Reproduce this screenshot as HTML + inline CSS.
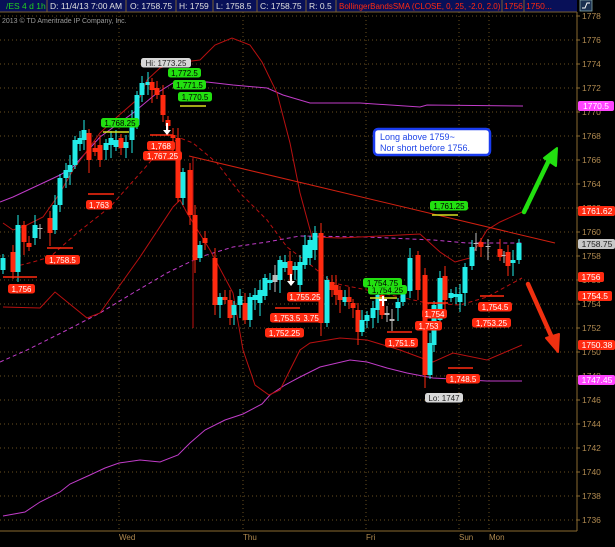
<!DOCTYPE html>
<html><head><meta charset="utf-8"><style>
html,body{margin:0;padding:0;background:#000;}
body{width:615px;height:542px;overflow:hidden;position:relative;font-family:"Liberation Sans",sans-serif;}
svg text{font-family:"Liberation Sans",sans-serif;}
</style></head><body>
<svg id="s" width="615" height="542" viewBox="0 0 615 542" xmlns="http://www.w3.org/2000/svg">
<rect width="615" height="542" fill="#000"/>
<g id="grid" stroke="#6a5020" stroke-width="1" stroke-dasharray="1,3"></g>
<g stroke="#6a5020" stroke-dasharray="1,3">
<line x1="119" y1="12" x2="119" y2="531"/><line x1="243" y1="12" x2="243" y2="531"/><line x1="366" y1="12" x2="366" y2="531"/><line x1="459" y1="12" x2="459" y2="531"/><line x1="489" y1="12" x2="489" y2="531"/>
</g>
<line x1="577" y1="12" x2="577" y2="531" stroke="#8a6a30"/>
<line x1="0" y1="531" x2="577" y2="531" stroke="#8a6a30"/>
<g id="axlab" fill="#b08a50" font-size="8.5"></g>
<g fill="#b08a50" font-size="8">
<text x="119" y="540">Wed</text><text x="243" y="540">Thu</text><text x="366" y="540">Fri</text><text x="459" y="540">Sun</text><text x="489" y="540">Mon</text>
</g>
<text x="2" y="23" fill="#9a9a9a" font-size="7">2013 © TD Ameritrade IP Company, Inc.</text>

<polyline fill="none" stroke="#c03cc8" stroke-width="1" points="0,202 13,197 43,183 60,175 73,167 100,137 133,113 157,93 173,83 207,82 233,85 267,88 283,95 310,103 360,103 420,107 427,105 523,106"/>
<polyline fill="none" stroke="#c03cc8" stroke-width="1" points="3,516 25,512 40,502 60,492 70,484 90,475 105,468 119,463 140,460 160,462 178,455 190,443 205,430 225,420 243,414 262,404 270,395 285,385 300,377 320,367 350,360 367,362 387,368 407,373 433,378 487,381 522,381"/>
<polyline fill="none" stroke="#c03cc8" stroke-width="1" stroke-dasharray="4,3" points="0,362 27,350 67,330 100,313 133,293 167,273 200,257 233,247 267,242 300,236 367,237 433,240 467,243 522,243"/>
<polyline fill="none" stroke="#b81010" stroke-width="1" points="3,223 13,230 27,225 43,217 60,193 73,170 100,133 117,117 140,97 147,80 160,68 175,63 200,60 215,45 232,38 250,45 262,62 277,93 290,143 300,193 312,237 340,238 380,236 420,234 440,252 455,262 470,258 487,230 500,222 522,212"/>
<polyline fill="none" stroke="#b81010" stroke-width="1" points="3,307 40,308 55,292 87,318 100,313 140,257 173,207 180,200 187,213 210,250 233,293 243,350 255,385 269,395 280,390 290,370 300,350 310,343 340,338 367,340 400,350 427,360 433,362 453,353 487,360 522,345"/>
<polyline fill="none" stroke="#b81010" stroke-width="1" stroke-dasharray="4,3" points="13,267 33,262 50,257 77,233 110,207 143,170 163,147 180,138 193,143 217,163 240,193 267,220 287,247 307,262 333,283 367,290 400,297 427,303 460,305 487,297 522,278"/>
<line x1="189" y1="156" x2="555" y2="243" stroke="#d02010" stroke-width="1"/>
<line x1="193" y1="157" x2="193" y2="328" stroke="#c01010" stroke-width="1"/>

<g id="candles"></g>

<g stroke="#ff2a10" stroke-width="1.5">
<line x1="3" y1="277" x2="37" y2="277"/><line x1="47" y1="248" x2="73" y2="248"/><line x1="88" y1="194" x2="114" y2="194"/><line x1="150" y1="135" x2="173" y2="135"/>
<line x1="387" y1="332" x2="412" y2="332"/><line x1="423" y1="303" x2="448" y2="303"/><line x1="480" y1="296" x2="504" y2="296"/><line x1="448" y1="368" x2="473" y2="368"/>
<line x1="275" y1="308" x2="300" y2="308"/>
</g>
<g stroke="#d8e020" stroke-width="1.5">
<line x1="103" y1="132" x2="129" y2="132"/><line x1="180" y1="106" x2="206" y2="106"/><line x1="370" y1="298" x2="397" y2="298"/><line x1="432" y1="215" x2="458" y2="215"/>
</g>

<g id="labels" font-size="8" text-anchor="middle"></g>

<path d="M167,123 L167,131" stroke="#fff" stroke-width="2"/><path d="M163,130 L171,130 L167,135 Z" fill="#fff"/>
<path d="M291,274 L291,282" stroke="#fff" stroke-width="2"/><path d="M287,281 L295,281 L291,286 Z" fill="#fff"/>
<path d="M383,296 L383,306 M379,300 L387,300" stroke="#fff" stroke-width="2"/>
<path d="M524,212 L550,158" stroke="#22e010" stroke-width="4.5" stroke-linecap="round"/>
<path d="M544,158 L557,148 L556,166 Z" fill="#22e010" stroke="#22e010" stroke-width="2" stroke-linejoin="round"/>
<path d="M528,284 L553,340" stroke="#f03010" stroke-width="4.5" stroke-linecap="round"/>
<path d="M546,338 L558,352 L559,334 Z" fill="#f03010" stroke="#f03010" stroke-width="2" stroke-linejoin="round"/>

<rect x="374" y="129" width="116" height="26" rx="4" fill="#fff" stroke="#1a3cf0" stroke-width="2.5"/>
<text x="380" y="140" fill="#2046e8" font-size="9">Long above 1759~</text>
<text x="380" y="151" fill="#2046e8" font-size="9">Nor short before 1756.</text>

<g font-size="8.5" text-anchor="middle">
<rect x="578" y="101" width="36" height="10" rx="2" fill="#ff44ff"/><text x="596" y="109" fill="#fff">1770.5</text>
<rect x="578" y="206" width="37" height="10" rx="2" fill="#ff2a10"/><text x="597" y="214" fill="#fff">1761.62</text>
<rect x="578" y="239" width="37" height="10" rx="2" fill="#c8c8c8"/><text x="597" y="247" fill="#222">1758.75</text>
<rect x="578" y="272" width="26" height="10" rx="2" fill="#ff2a10"/><text x="591" y="280" fill="#fff">1756</text>
<rect x="578" y="291" width="34" height="10" rx="2" fill="#ff2a10"/><text x="595" y="299" fill="#fff">1754.5</text>
<rect x="578" y="340" width="37" height="10" rx="2" fill="#ff2a10"/><text x="597" y="348" fill="#fff">1750.38</text>
<rect x="578" y="375" width="37" height="10" rx="2" fill="#ff44ff"/><text x="597" y="383" fill="#fff">1747.45</text>
</g>

<rect x="0" y="0" width="577" height="12" fill="#081058"/>
<g stroke="#7a6030" stroke-width="1">
<line x1="47" y1="0" x2="47" y2="12"/><line x1="126" y1="0" x2="126" y2="12"/><line x1="176" y1="0" x2="176" y2="12"/><line x1="213" y1="0" x2="213" y2="12"/><line x1="257" y1="0" x2="257" y2="12"/><line x1="306" y1="0" x2="306" y2="12"/><line x1="336" y1="0" x2="336" y2="12"/><line x1="502" y1="0" x2="502" y2="12"/><line x1="524" y1="0" x2="524" y2="12"/>
<line x1="0" y1="12" x2="577" y2="12"/>
</g>
<g font-size="8.5" fill="#e0e0e0">
<text x="6" y="9" fill="#22d020">/ES 4 d 1h</text>
<text x="50" y="9">D: 11/4/13 7:00 AM</text>
<text x="130" y="9">O: 1758.75</text>
<text x="179" y="9">H: 1759</text>
<text x="216" y="9">L: 1758.5</text>
<text x="260" y="9">C: 1758.75</text>
<text x="309" y="9">R: 0.5</text>
<text x="339" y="9" fill="#ff2a10" font-size="8">BollingerBandsSMA (CLOSE, 0, 25, -2.0, 2.0)</text>
<text x="504" y="9" fill="#ff2a10">1756</text>
<text x="526" y="9" fill="#ff2a10">1750...</text>
</g>
<rect x="580" y="0" width="12" height="11" fill="#1a3050" stroke="#8aa" stroke-width="0.8"/>
<path d="M582,8 L585,8 L587,3 L590,3" stroke="#fff" fill="none" stroke-width="1"/>
</svg>
<script>
var NS="http://www.w3.org/2000/svg",s=document.getElementById('s');
function el(p,t,a){var e=document.createElementNS(NS,t);for(var k in a)e.setAttribute(k,a[k]);p.appendChild(e);return e;}
var g=document.getElementById('grid'),al=document.getElementById('axlab');
for(var p=1778;p>=1736;p-=2){var y=16+(1778-p)*12;el(g,'line',{x1:0,y1:y,x2:577,y2:y});el(al,'line',{x1:577,y1:y,x2:580,y2:y,stroke:'#8a6a30'});var t=el(al,'text',{x:582,y:y+3});t.textContent=p;}
var C='#22ece8',R='#ff2a10',G='#bbbbbb';
var d=[[3,258,270,C],[13,252,272,R],[18,225,272,C],[24,225,242,R],[29,243,247,R],[35,225,238,C],[40,228,229,G],[50,218,233,R],[55,205,230,C],[60,178,205,C],[66,170,178,C],[70,165,172,C],[75,140,165,C],[80,138,144,C],[84,130,140,C],[89,133,160,R],[95,148,152,R],[100,145,160,R],[106,143,150,C],[111,138,145,C],[116,140,147,C],[121,138,148,R],[126,142,148,C],[132,120,140,C],[137,95,125,C],[142,83,95,C],[148,82,85,C],[152,82,90,R],[157,88,95,R],[163,95,115,R],[168,120,126,R],[173,135,138,R],[178,138,198,R],[183,172,198,C],[190,170,215,R],[195,215,260,R],[200,245,258,C],[205,238,243,R],[215,258,305,R],[220,297,305,C],[225,297,300,R],[230,300,318,R],[234,305,315,C],[240,296,305,C],[245,303,320,R],[250,297,320,C],[255,295,300,C],[260,290,303,C],[265,278,296,C],[270,280,283,C],[275,275,282,G],[280,260,280,C],[285,262,268,C],[290,261,275,R],[295,266,270,C],[300,262,285,C],[305,245,265,C],[310,240,258,C],[315,233,250,C],[321,233,323,R],[327,280,323,C],[332,282,290,R],[336,285,295,R],[340,290,300,R],[345,297,302,C],[349,297,302,R],[353,303,308,R],[358,310,332,R],[362,320,332,C],[367,315,321,C],[373,308,318,C],[378,295,310,C],[382,295,315,R],[387,313,315,G],[392,319,321,G],[398,302,308,C],[403,292,302,C],[410,258,291,C],[418,255,290,R],[425,275,375,R],[430,343,375,C],[434,305,345,C],[440,278,320,C],[445,276,300,R],[451,293,298,C],[456,294,297,C],[460,294,302,C],[465,267,293,C],[472,247,266,C],[476,243,244,G],[481,242,247,R],[488,246,247,G],[500,249,257,R],[504,255,256,G],[508,252,266,R],[513,260,263,C],[519,243,260,C]];
var cg=document.getElementById('candles');
d.forEach(function(c,i){var x=c[0],t=Math.min(c[1],c[2]),b=Math.max(c[1],c[2]);var wt=t-4-(i%3)*3,wb=b+4+(i%4)*3;
el(cg,'line',{x1:x,y1:wt,x2:x,y2:wb,stroke:c[3],'stroke-width':1});
el(cg,'rect',{x:x-2.5,y:t,width:5,height:Math.max(1,b-t),fill:c[3]});});
var L=[[8,284,27,'1,756',R,'#fff'],[45,255,35,'1,758.5',R,'#fff'],[86,200,26,'1,763',R,'#fff'],[147,141,28,'1,768',R,'#fff'],[143,151,39,'1,767.25',R,'#fff'],
[101,118,38,'1,768.25','#22e010','#000'],[141,58,50,'Hi: 1773.25','#d8d8d8','#222'],[168,68,33,'1,772.5','#22e010','#000'],[173,80,33,'1,771.5','#22e010','#000'],[178,92,34,'1,770.5','#22e010','#000'],
[300,313,22,'3.75',R,'#fff'],[270,313,34,'1,753.5',R,'#fff'],[287,292,36,'1,755.25',R,'#fff'],[265,328,39,'1,752.25',R,'#fff'],
[368,285,39,'1,754.25','#22e010','#000'],[363,278,39,'1,754.75','#22e010','#000'],[430,201,38,'1,761.25','#22e010','#000'],
[422,309,25,'1,754',R,'#fff'],[415,321,27,'1,753',R,'#fff'],[385,338,33,'1,751.5',R,'#fff'],[478,302,34,'1,754.5',R,'#fff'],[472,318,39,'1,753.25',R,'#fff'],[446,374,34,'1,748.5',R,'#fff'],[425,393,38,'Lo: 1747','#d8d8d8','#222']];
var lg=document.getElementById('labels');
L.forEach(function(l){el(lg,'rect',{x:l[0],y:l[1],width:l[2],height:9.5,rx:2.5,fill:l[4]});var t=el(lg,'text',{x:l[0]+l[2]/2,y:l[1]+7.8,fill:l[5]});t.textContent=l[3];});
</script>
</body></html>
